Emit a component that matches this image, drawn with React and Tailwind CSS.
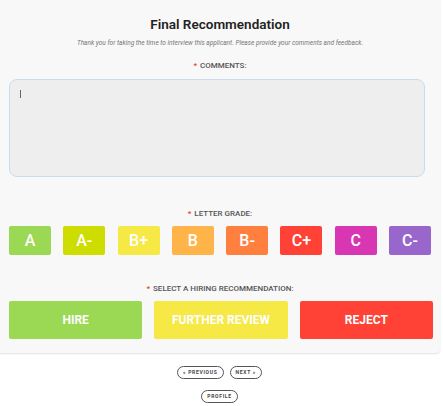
const grades = [
  { label: "A", color: "bg-[#9bd853]" },
  { label: "A-", color: "bg-[#cedd00]" },
  { label: "B+", color: "bg-[#f6e845]" },
  { label: "B", color: "bg-[#ffb449]" },
  { label: "B-", color: "bg-[#ff7f3f]" },
  { label: "C+", color: "bg-[#ff4136]" },
  { label: "C", color: "bg-[#d936b4]" },
  { label: "C-", color: "bg-[#9966cc]" },
];

const choices = [
  { label: "HIRE", color: "bg-[#9bd853]" },
  { label: "FURTHER REVIEW", color: "bg-[#f6e845]" },
  { label: "REJECT", color: "bg-[#ff4136]" },
];

const Label = ({ children }) => (
  <div className="text-center text-[8px] font-medium uppercase text-[#555]">
    <span className="text-[#e53935] mr-[3px]">*</span>
    {children}
  </div>
);

const Pill = ({ children }) => (
  <button className="h-[13px] px-[5px] rounded-full border border-[#555] bg-white text-[5px] font-bold tracking-[0.7px] text-[#444] leading-none">
    {children}
  </button>
);

export default function App() {
  return (
    <div className="w-[443px] h-[406px] bg-white font-['Roboto',sans-serif] overflow-hidden">
      <div className="w-[440px] h-[353px] bg-[#f8f8f8] rounded-br-[4px] shadow-[0_1px_2px_rgba(0,0,0,0.12)] flex flex-col pt-[15px]">
        <h1 className="text-center text-[13.5px] font-semibold text-[#222] leading-[18px]">
          Final Recommendation
        </h1>
        <p className="mt-[6px] text-center text-[6.5px] italic text-[#777] leading-[8px]">
          Thank you for taking the time to interview this applicant. Please provide your comments and feedback.
        </p>
        <div className="mt-[13px]">
          <Label>Comments:</Label>
        </div>
        <div className="mt-[7px] ml-[9px] w-[416px] h-[98px] rounded-[8px] border border-[#c7dbee] bg-[#eeeeee] p-[10px]">
          <div className="w-px h-[8px] bg-[#666]"></div>
        </div>
        <div className="mt-[31px]">
          <Label>Letter grade:</Label>
        </div>
        <div className="mt-[6px] px-[9px] flex justify-between w-[440px] pr-[9px]">
          {grades.map((g) => (
            <button
              key={g.label}
              className={`${g.color} w-[42px] h-[29px] rounded-[2px] text-white text-[16px] font-medium leading-none`}
            >
              {g.label}
            </button>
          ))}
        </div>
        <div className="mt-[28px]">
          <Label>Select a hiring recommendation:</Label>
        </div>
        <div className="mt-[6px] pl-[9px] pr-[7px] flex gap-[12px]">
          {choices.map((c) => (
            <button
              key={c.label}
              className={`${c.color} flex-1 h-[38px] rounded-[2px] text-white text-[12px] font-bold leading-none`}
            >
              {c.label}
            </button>
          ))}
        </div>
      </div>
      <div className="flex justify-center gap-[6px] mt-[13px] mr-[4px]">
        <Pill>« PREVIOUS</Pill>
        <Pill>NEXT »</Pill>
      </div>
      <div className="flex justify-center mt-[11px] mr-[4px]">
        <Pill>PROFILE</Pill>
      </div>
    </div>
  );
}
